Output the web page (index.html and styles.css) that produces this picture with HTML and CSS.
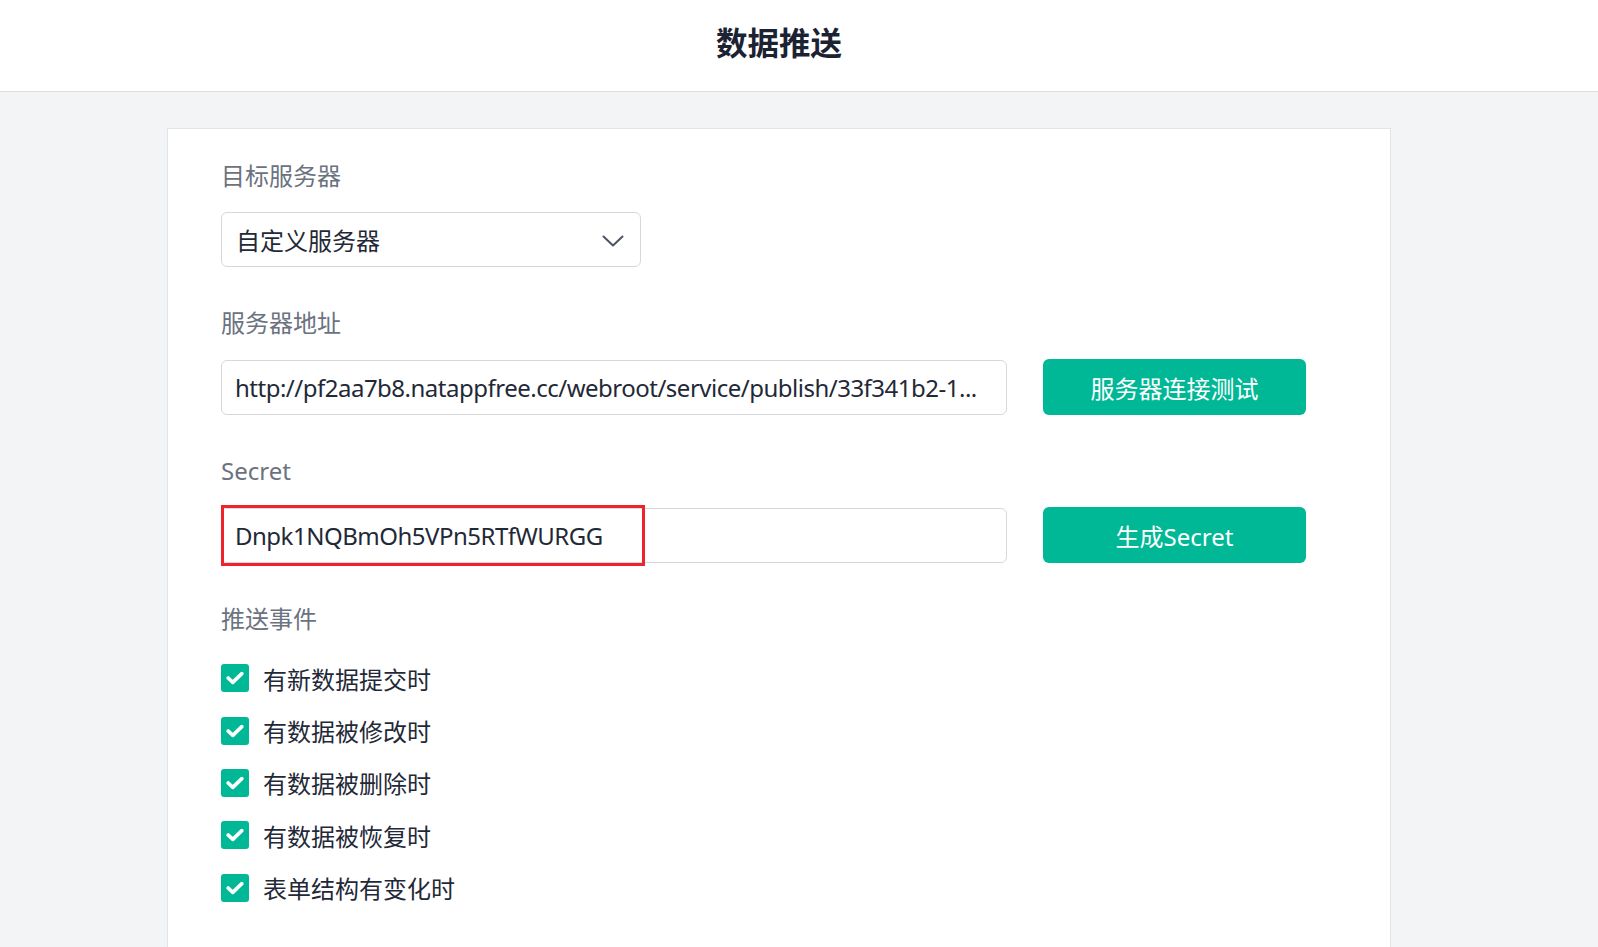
FILE: index.html
```html
<!DOCTYPE html>
<html lang="zh-CN">
<head>
<meta charset="utf-8">
<title>数据推送</title>
<link rel="stylesheet" href="styles.css">
</head>
<body>
<header class="topbar">
  <h1 class="title">数据推送</h1>
</header>
<main class="page">
  <section class="card">
    <div class="field">
      <div class="label">目标服务器</div>
      <div class="select">
        <span class="select-text">自定义服务器</span>
        <svg class="chevron" width="22" height="12" viewBox="0 0 22 12"><path d="M1.5 1.5 L11 10.5 L20.5 1.5" fill="none" stroke="#4b5563" stroke-width="2" stroke-linecap="round" stroke-linejoin="round"/></svg>
      </div>
    </div>
    <div class="field">
      <div class="label">服务器地址</div>
      <div class="row">
        <div class="input"><span class="input-text">http://pf2aa7b8.natappfree.cc/webroot/service/publish/33f341b2-1...</span></div>
        <button class="btn">服务器连接测试</button>
      </div>
    </div>
    <div class="field">
      <div class="label">Secret</div>
      <div class="row">
        <div class="input"><span class="input-text">Dnpk1NQBmOh5VPn5RTfWURGG</span><span class="mark"></span></div>
        <button class="btn">生成Secret</button>
      </div>
    </div>
    <div class="field">
      <div class="label">推送事件</div>
      <ul class="checks">
        <li class="check"><span class="box"><svg width="18" height="14" viewBox="0 0 18 14"><path d="M2.2 7 L6.8 11.4 L15.8 2.6" fill="none" stroke="#fff" stroke-width="3.6" stroke-linecap="round" stroke-linejoin="round"/></svg></span><span>有新数据提交时</span></li>
        <li class="check"><span class="box"><svg width="18" height="14" viewBox="0 0 18 14"><path d="M2.2 7 L6.8 11.4 L15.8 2.6" fill="none" stroke="#fff" stroke-width="3.6" stroke-linecap="round" stroke-linejoin="round"/></svg></span><span>有数据被修改时</span></li>
        <li class="check"><span class="box"><svg width="18" height="14" viewBox="0 0 18 14"><path d="M2.2 7 L6.8 11.4 L15.8 2.6" fill="none" stroke="#fff" stroke-width="3.6" stroke-linecap="round" stroke-linejoin="round"/></svg></span><span>有数据被删除时</span></li>
        <li class="check"><span class="box"><svg width="18" height="14" viewBox="0 0 18 14"><path d="M2.2 7 L6.8 11.4 L15.8 2.6" fill="none" stroke="#fff" stroke-width="3.6" stroke-linecap="round" stroke-linejoin="round"/></svg></span><span>有数据被恢复时</span></li>
        <li class="check"><span class="box"><svg width="18" height="14" viewBox="0 0 18 14"><path d="M2.2 7 L6.8 11.4 L15.8 2.6" fill="none" stroke="#fff" stroke-width="3.6" stroke-linecap="round" stroke-linejoin="round"/></svg></span><span>表单结构有变化时</span></li>
      </ul>
    </div>
  </section>
</main>
</body>
</html>
```
FILE: styles.css
```css
* { box-sizing: border-box; }
html, body {
  margin: 0;
  padding: 0;
  height: 100%;
  overflow: hidden;
}
body {
  background: #f3f4f6;
  font-family: "Noto Sans", "Noto Sans CJK SC", sans-serif;
  color: #1f2937;
}
.topbar {
  height: 92px;
  background: #fff;
  border-bottom: 1px solid #dcdde0;
  padding-right: 40px;
  display: flex;
  align-items: center;
  justify-content: center;
}
.title {
  margin: 0;
  font-size: 31.5px;
  font-weight: 700;
  color: #1b2333;
  font-family: "Noto Sans CJK SC", sans-serif;
  line-height: 40px;
  padding-bottom: 10px;
}
.page {
  width: 1558px;
  padding-top: 36px;
}
.card {
  width: 1224px;
  margin: 0 auto;
  min-height: 900px;
  background: #fff;
  border: 1px solid #e3e4e7;
  padding: 31px 54px 31px 53px;
  display: flex;
  flex-direction: column;
  gap: 40px;
}
.field {
  display: flex;
  flex-direction: column;
  gap: 20px;
}
.label {
  font-size: 24px;
  line-height: 32px;
  color: #6b7280;
}
.select {
  width: 420px;
  height: 55px;
  border: 1px solid #d6d8dc;
  border-radius: 6px;
  display: flex;
  align-items: center;
  justify-content: space-between;
  padding: 0 16px 0 14px;
}
.select-text {
  font-size: 24px;
  color: #1f2937;
}
.chevron { display: block; margin-top: 2px; }
.row {
  display: flex;
  align-items: center;
  gap: 36px;
}
.input {
  position: relative;
  width: 786px;
  height: 55px;
  border: 1px solid #d6d8dc;
  border-radius: 6px;
  display: flex;
  align-items: center;
  padding: 0 14px 0 13px;
}
.input-text {
  font-size: 24px;
  letter-spacing: -0.5px;
  color: #1f2937;
  white-space: nowrap;
  overflow: hidden;
}
.mark {
  position: absolute;
  left: -1px;
  top: -4px;
  width: 424px;
  height: 61px;
  border: 3px solid #ee232b;
}
.btn {
  width: 263px;
  height: 56px;
  border: 0;
  border-radius: 6px;
  background: #00b896;
  color: #fff;
  font-family: "Noto Sans", "Noto Sans CJK SC", sans-serif;
  font-size: 24px;
  padding: 0;
}
.checks {
  list-style: none;
  margin: -3px 0 0;
  padding: 0;
  display: flex;
  flex-direction: column;
}
.check {
  height: 52.4px;
  display: flex;
  align-items: center;
  gap: 14px;
  font-size: 24px;
  color: #1f2937;
}
.box {
  width: 28px;
  height: 28px;
  border-radius: 3px;
  background: #00b896;
  display: flex;
  align-items: center;
  justify-content: center;
}
.box svg { display: block; }
```
